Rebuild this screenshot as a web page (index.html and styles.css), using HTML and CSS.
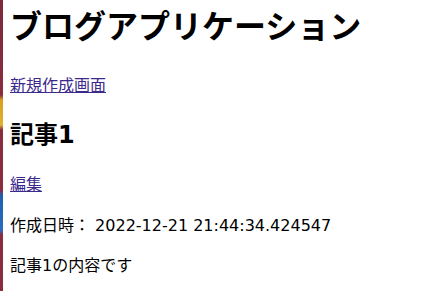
FILE: index.html
```html
<!DOCTYPE html>
<html lang="ja">
<head>
  <meta charset="UTF-8" />
  <meta name="viewport" content="width=device-width, initial-scale=1.0"/>
  <title>ブログアプリケーション</title>
  <link rel="stylesheet" href="styles.css">
</head>
<body>

  <h1>ブログアプリケーション</h1>

  <p><a href="#">新規作成画面</a></p>

  <!-- 記事 -->
  <div class="post">
    <h2>記事1</h2>
    <p><a href="#">編集</a></p>
    <p>作成日時： 2022-12-21 21:44:34.424547</p>
    <p>記事1の内容です</p>
  </div>

</body>
</html>
```

FILE: styles.css
```css
html {
  background:
    linear-gradient(to bottom, #7c2a3c 0, #8a2c3e 95px, #d8a020 100px, #e0b030 125px, #8a2c3e 130px, #8a2c3e 190px, #1f5fb0 195px, #2a6cc0 230px, #8a2c3e 235px, #8a2c3e 100%) left top / 3px 100% no-repeat,
    #fff;
}

body {
  font-family: "DejaVu Sans", "Noto Sans CJK JP", sans-serif;
  font-size: 16px;
  line-height: 1.5;
  color: #000;
  margin: 0 8px 0 10px;
}

h1 {
  font-size: 32px;
  margin: 3px 0 23px;
}

h2 {
  font-size: 24px;
  margin: 18px 0 20px;
}

p {
  margin: 16px 0;
  line-height: 1.55;
}

a {
  color: #3b2a8c;
}
```
